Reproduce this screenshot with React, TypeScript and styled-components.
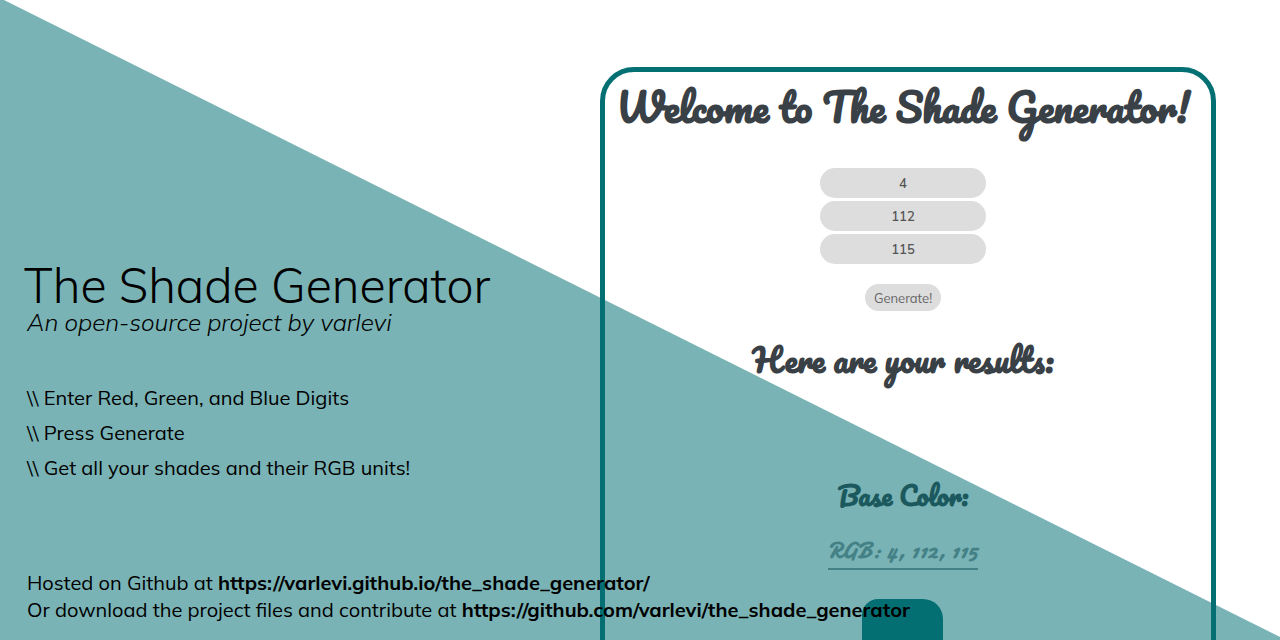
import React from "react";
import styled, { createGlobalStyle } from "styled-components";

const sans = `Mulish, Muli, Lato, sans-serif`;
const script = `Pacifico, Lato, cursive`;

const GlobalStyle = createGlobalStyle`
  *, *::before, *::after { box-sizing: border-box; }
  body { margin: 0; background: #ffffff; font-family: ${sans}; color: #000000; }
`;

const Hero = styled.main`
  position: relative;
  display: grid;
  grid-template-columns: 75fr 77fr 8fr;
  grid-template-rows: 100%;
  height: 100vh;
  overflow: hidden;
`;

const Wedge = styled.div`
  position: absolute;
  inset: 0;
  z-index: 1;
  background: #047073;
  opacity: 0.53;
  clip-path: polygon(4px 0, 100% calc(100% - 3px), 100% 100%, 0 100%, 0 0);
  pointer-events: none;
`;

const Intro = styled.section`
  position: relative;
  z-index: 2;
  display: flex;
  flex-direction: column;
  justify-content: flex-end;
  padding: 0 0 17px 27px;
  min-width: 0;
  white-space: nowrap;
`;

const Title = styled.h1`
  margin: 0 0 0 -3px;
  font-size: 48px;
  line-height: 48px;
  font-weight: 300;
`;

const Tagline = styled.p`
  margin: 0;
  font-size: 24px;
  line-height: 27px;
  font-style: italic;
  font-weight: 300;
`;

const Steps = styled.ul`
  margin: 44px 0 84px;
  padding: 0;
  list-style: none;
  font-size: 20px;
  line-height: 35px;
`;

const Hosting = styled.p`
  margin: 0;
  font-size: 20px;
  line-height: 27px;
`;

const Link = styled.a`
  color: inherit;
  font-weight: 700;
  text-decoration: none;
`;

const Card = styled.section`
  display: flex;
  flex-direction: column;
  align-items: center;
  height: 720px;
  margin-top: 67px;
  padding-right: 10px;
  border: 5px solid #047073;
  border-radius: 34px;
  color: #394046;
  white-space: nowrap;
`;

const Heading = styled.h2<{ $size: number; $line: number }>`
  margin: 0;
  font-family: ${script};
  font-weight: 700;
  font-size: ${(p) => p.$size}px;
  line-height: ${(p) => p.$line}px;
`;

const Form = styled.form`
  display: flex;
  flex-direction: column;
  align-items: center;
  gap: 3px;
  margin: 26px 0;
`;

const Channel = styled.input`
  width: 166px;
  height: 30px;
  padding: 0;
  border: 0;
  border-radius: 15px;
  background: #dddddd;
  color: #555555;
  font: 600 13px/30px ${sans};
  text-align: center;
`;

const Submit = styled.button`
  height: 27px;
  width: 76px;
  margin-top: 17px;
  padding: 2px 0 0;
  border: 0;
  border-radius: 14px;
  background: #dddddd;
  color: #666666;
  font: 400 13px/25px ${sans};
`;

const Result = styled.div`
  display: flex;
  flex-direction: column;
  align-items: center;
  margin-top: 89px;
`;

const Value = styled.p`
  margin: 17px 0 29px;
  padding-bottom: 3px;
  border-bottom: 2px solid #8d959d;
  color: #8d959d;
  font-family: Damion, ${script};
  font-weight: 700;
  font-size: 23px;
  line-height: 28px;
`;

const Swatch = styled.div`
  width: 81px;
  height: 81px;
  border-radius: 16px 20px 20px 16px;
  background: #047073;
`;

const steps = [
  "Enter Red, Green, and Blue Digits",
  "Press Generate",
  "Get all your shades and their RGB units!",
];

const channels = [
  { name: "Red", value: "4" },
  { name: "Green", value: "112" },
  { name: "Blue", value: "115" },
];

export default function App() {
  return (
    <>
      <GlobalStyle />
      <Hero>
        <Intro>
          <Title>The Shade Generator</Title>
          <Tagline>An open-source project by varlevi</Tagline>
          <Steps>
            {steps.map((step) => (
              <li key={step}>{`\\\\ ${step}`}</li>
            ))}
          </Steps>
          <Hosting>
            Hosted on Github at{" "}
            <Link href="https://varlevi.github.io/the_shade_generator/">
              https://varlevi.github.io/the_shade_generator/
            </Link>
          </Hosting>
          <Hosting>
            Or download the project files and contribute at{" "}
            <Link href="https://github.com/varlevi/the_shade_generator">
              https://github.com/varlevi/the_shade_generator
            </Link>
          </Hosting>
        </Intro>
        <Card>
          <Heading $size={39} $line={70}>Welcome to The Shade Generator!</Heading>
          <Form onSubmit={(e) => e.preventDefault()}>
            {channels.map((c) => (
              <Channel key={c.name} aria-label={c.name} inputMode="numeric" defaultValue={c.value} />
            ))}
            <Submit type="submit">Generate!</Submit>
          </Form>
          <Heading $size={32} $line={44}>Here are your results:</Heading>
          <Result>
            <Heading as="h3" $size={26} $line={50}>Base Color:</Heading>
            <Value>RGB: 4, 112, 115</Value>
            <Swatch />
          </Result>
        </Card>
        <Wedge />
      </Hero>
    </>
  );
}
